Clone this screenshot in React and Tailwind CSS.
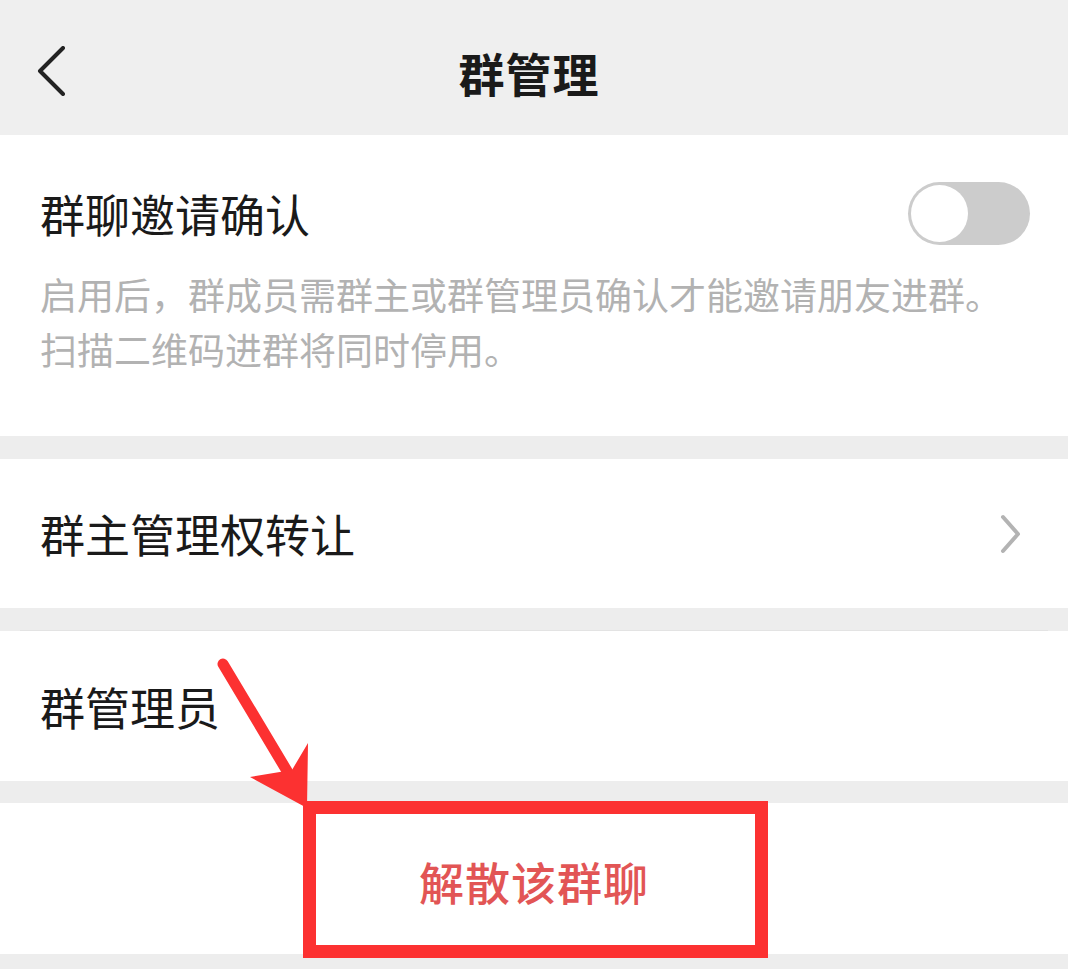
export default function App() {
  return (
    <div
      className="relative w-[1068px] h-[969px] overflow-hidden bg-[#ededed] text-[#1a1a1a]"
      style={{ fontFamily: '"Noto Sans CJK SC", "Noto Sans", sans-serif' }}
    >
      {/* 顶栏 */}
      <div className="relative h-[135px] bg-[#efefef] flex items-center justify-center">
        <svg className="absolute left-[36px] top-[46px]" width="30" height="50" viewBox="0 0 30 50">
          <polyline points="27,2 4,25 27,48" fill="none" stroke="#222" strokeWidth="4" strokeLinecap="round" strokeLinejoin="round" />
        </svg>
        <h1 className="text-[46px] font-semibold leading-none tracking-[1px] -ml-[10px] mt-[8px]">群管理</h1>
      </div>

      {/* 邀请确认 */}
      <div className="h-[301px] bg-white px-[40px] pt-[45px]">
        <div className="h-[66px] flex items-center justify-between">
          <span className="text-[45px] leading-none">群聊邀请确认</span>
          <div className="w-[122px] h-[63px] rounded-full bg-[#cccccc] p-[3px] -mr-[2px]">
            <div className="w-[57px] h-[57px] rounded-full bg-white" />
          </div>
        </div>
        <p className="mt-[21px] text-[37px] leading-[55px] text-[#b2b2b2]">
          启用后，群成员需群主或群管理员确认才能邀请朋友进群。
          <br />
          扫描二维码进群将同时停用。
        </p>
      </div>

      <div className="h-[23px]" />

      {/* 群主管理权转让 */}
      <div className="h-[149px] bg-white px-[40px] flex items-center justify-between">
        <span className="text-[45px] leading-none">群主管理权转让</span>
        <svg className="mr-[6px]" width="22" height="40" viewBox="0 0 22 40">
          <polyline points="3,3 18,20 3,37" fill="none" stroke="#b3b3b3" strokeWidth="4" strokeLinecap="round" strokeLinejoin="round" />
        </svg>
      </div>

      <div className="h-[23px] flex items-end">
        <div className="h-px w-full mx-[20px] bg-[#e3e3e3]" />
      </div>

      {/* 群管理员 */}
      <div className="h-[150px] bg-white px-[40px] flex items-center">
        <span className="text-[45px] leading-none">群管理员</span>
      </div>

      <div className="h-[22px]" />

      {/* 解散 */}
      <div className="h-[151px] bg-white flex items-center justify-center">
        <span className="text-[45px] leading-none font-medium text-[#e25555] mt-[6px] tracking-[1px]">解散该群聊</span>
      </div>

      {/* 标注：红框与箭头 */}
      <div className="absolute left-[303px] top-[801px] w-[465px] h-[157px] border-[13px] border-[#fc3131]" />
      <svg className="absolute left-0 top-0 pointer-events-none" width="1068" height="969" viewBox="0 0 1068 969">
        <line x1="223" y1="664" x2="296" y2="786" stroke="#fc3131" strokeWidth="11" strokeLinecap="round" />
        <polygon points="250,777 292,770 308,743 307,808" fill="#fc3131" />
      </svg>
    </div>
  );
}
